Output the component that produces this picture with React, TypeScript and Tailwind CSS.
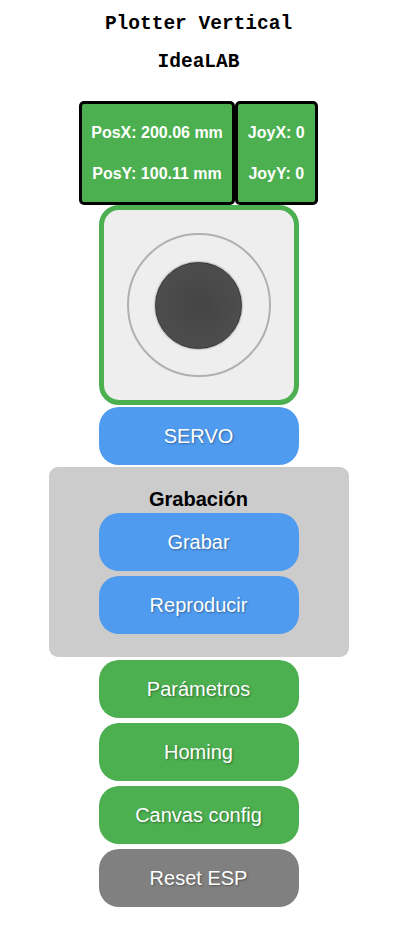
const shadow = '[text-shadow:1px_1px_2px_rgba(0,0,0,0.35)]';

function Btn({ label, color }: { label: string; color: string }) {
  return (
    <button
      className={`w-[200px] h-[58px] rounded-[20px] text-white text-[20px] leading-[23px] ${color} ${shadow}`}
    >
      {label}
    </button>
  );
}

export default function App() {
  return (
    <div className="w-[397px] flex flex-col items-center bg-white pb-6" style={{ fontFamily: '"Liberation Sans", Arial, sans-serif' }}>
      <h2
        className="pt-[12px] text-[19.5px] leading-[24px] font-bold text-black"
        style={{ fontFamily: '"Liberation Mono", "Courier New", monospace' }}
      >
        Plotter Vertical
      </h2>
      <h2
        className="mt-[14px] text-[19.5px] leading-[24px] font-bold text-black"
        style={{ fontFamily: '"Liberation Mono", "Courier New", monospace' }}
      >
        IdeaLAB
      </h2>

      <div className="mt-[27px] flex">
        <div className="h-[104px] px-[9px] border-[3px] border-black rounded-[5px] bg-[#4caf50] text-white font-bold text-[16px] leading-[18px] flex flex-col justify-center items-center gap-[23px]">
          <span>PosX: 200.06 mm</span>
          <span>PosY: 100.11 mm</span>
        </div>
        <div className="h-[104px] px-[10px] border-[3px] border-black rounded-[5px] bg-[#4caf50] text-white font-bold text-[16px] leading-[18px] flex flex-col justify-center items-center gap-[23px]">
          <span>JoyX: 0</span>
          <span>JoyY: 0</span>
        </div>
      </div>

      <div className="w-[200px] h-[200px] border-[5px] border-[#4caf50] rounded-[20px] bg-[#eee] flex items-center justify-center">
        <div className="w-[144px] h-[144px] rounded-full border-2 border-[#b0b0b0] flex items-center justify-center">
          <div className="w-[87px] h-[87px] rounded-full border border-[#333] bg-[radial-gradient(circle,#444_0%,#4d4d4d_70%,#505050_100%)] shadow-[0_0_2px_rgba(0,0,0,0.6)]" />
        </div>
      </div>

      <div className="mt-[2px]">
        <Btn label="SERVO" color="bg-[#4f9bef]" />
      </div>

      <div className="mt-[2px] w-[300px] rounded-[9px] bg-[#ccc] pt-[21px] pb-[23px] flex flex-col items-center">
        <h3 className="text-[20px] leading-[23px] font-bold text-black">Grabación</h3>
        <div className="mt-[2px] flex flex-col gap-[5px]">
          <Btn label="Grabar" color="bg-[#4f9bef]" />
          <Btn label="Reproducir" color="bg-[#4f9bef]" />
        </div>
      </div>

      <div className="mt-[3px] flex flex-col gap-[5px]">
        <Btn label="Parámetros" color="bg-[#4caf50]" />
        <Btn label="Homing" color="bg-[#4caf50]" />
        <Btn label="Canvas config" color="bg-[#4caf50]" />
        <Btn label="Reset ESP" color="bg-[#808080]" />
      </div>
    </div>
  );
}
